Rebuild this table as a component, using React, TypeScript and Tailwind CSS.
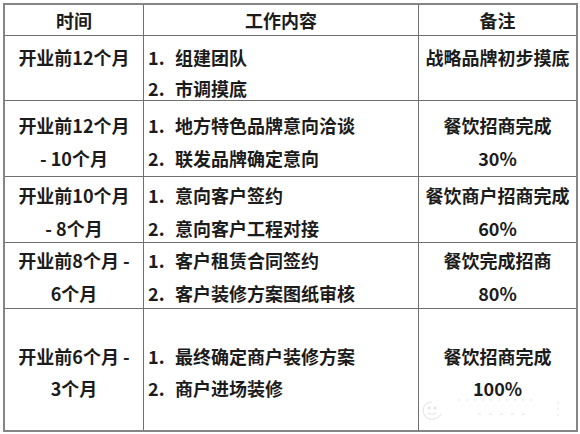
type Row = {
  height: string;
  pad: string;
  lead: string;
  align: "top" | "center";
  time: string[];
  work: string[];
  note: string[];
};

const rows: Row[] = [
  {
    height: "h-[65px]",
    pad: "pt-[6px]",
    lead: "leading-[31px]",
    align: "top",
    time: ["开业前12个月"],
    work: ["组建团队", "市调摸底"],
    note: ["战略品牌初步摸底"],
  },
  {
    height: "h-[76px]",
    pad: "pt-[6px]",
    lead: "leading-[33px]",
    align: "center",
    time: ["开业前12个月", "- 10个月"],
    work: ["地方特色品牌意向洽谈", "联发品牌确定意向"],
    note: ["餐饮招商完成", "30%"],
  },
  {
    height: "h-[66px]",
    pad: "pt-[5px]",
    lead: "leading-[33px]",
    align: "center",
    time: ["开业前10个月", "- 8个月"],
    work: ["意向客户签约", "意向客户工程对接"],
    note: ["餐饮商户招商完成", "60%"],
  },
  {
    height: "h-[66px]",
    pad: "pt-[3px]",
    lead: "leading-[33px]",
    align: "center",
    time: ["开业前8个月 -", "6个月"],
    work: ["客户租赁合同签约", "客户装修方案图纸审核"],
    note: ["餐饮完成招商", "80%"],
  },
  {
    height: "h-[121px]",
    pad: "pt-[4px]",
    lead: "leading-[32px]",
    align: "center",
    time: ["开业前6个月 -", "3个月"],
    work: ["最终确定商户装修方案", "商户进场装修"],
    note: ["餐饮招商完成", "100%"],
  },
];

export default function App() {
  return (
    <div className="relative w-[580px] h-[434px] bg-white overflow-hidden font-['Noto_Sans_CJK_SC','Noto_Sans',sans-serif] font-bold text-[18px] text-[#1c1c1c]">
      <div className="ml-[3px] mt-[3px] w-[575px] border-2 border-[#858585]">
        {/* header */}
        <div className="flex h-[31px] border-b border-[#707070] leading-[30px]">
          <div className="w-[139px] border-r border-[#707070] text-center">时间</div>
          <div className="w-[275px] border-r border-[#707070] text-center">工作内容</div>
          <div className="w-[157px] text-center">备注</div>
        </div>

        {rows.map((r, i) => {
          const v = r.align === "top" ? "justify-start" : "justify-center";
          return (
            <div
              key={i}
              className={`flex ${r.height} ${r.lead} ${i < rows.length - 1 ? "border-b border-[#707070]" : ""}`}
            >
              <div className={`w-[139px] border-r border-[#707070] flex flex-col items-center ${v} ${r.pad}`}>
                {r.time.map((t) => (
                  <span key={t} className="whitespace-nowrap">{t}</span>
                ))}
              </div>
              <div className={`w-[275px] border-r border-[#707070] flex flex-col ${v} ${r.pad} pl-[4px]`}>
                {r.work.map((w, j) => (
                  <div key={w} className="flex whitespace-nowrap">
                    <span className="w-[27px]">{j + 1}.</span>
                    <span>{w}</span>
                  </div>
                ))}
              </div>
              <div className={`w-[157px] flex flex-col items-center ${v} ${r.pad}`}>
                {r.note.map((n) => (
                  <span key={n} className="whitespace-nowrap">{n}</span>
                ))}
              </div>
            </div>
          );
        })}
      </div>

      {/* faint watermark */}
      <svg
        className="absolute left-[418px] top-[392px] opacity-40"
        width="150"
        height="32"
        viewBox="0 0 150 32"
        fill="none"
        stroke="#b5b5b5"
        strokeWidth="1"
      >
        <path d="M14 10 C6 10 3 18 7 24 C11 29 20 28 23 22" />
        <circle cx="11" cy="16" r="1" fill="#b5b5b5" />
        <circle cx="17" cy="16" r="1" fill="#b5b5b5" />
        <path d="M10 21 Q14 24 18 21" />
        <path d="M40 8 L120 8" strokeDasharray="2 6" />
        <path d="M60 22 L110 22" strokeDasharray="3 8" />
        <path d="M140 10 L140 24" strokeDasharray="2 4" />
      </svg>
    </div>
  );
}
